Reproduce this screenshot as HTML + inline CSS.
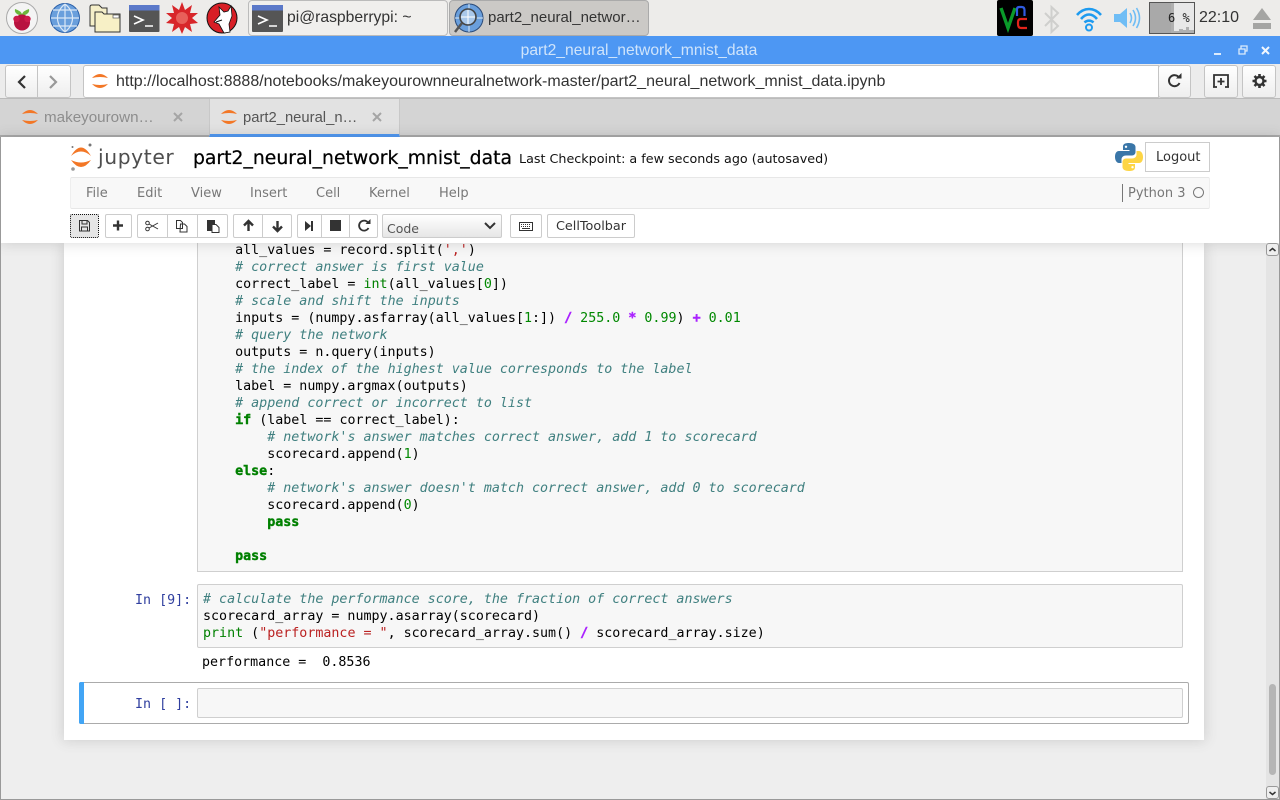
<!DOCTYPE html>
<html><head><meta charset="utf-8">
<style>
html,body{margin:0;padding:0;width:1280px;height:800px;overflow:hidden;background:#eee}
body{position:relative;font-family:"Liberation Sans",sans-serif}
.a{position:absolute;white-space:pre}
.box{position:absolute;box-sizing:border-box}
.d{font-family:"DejaVu Sans",sans-serif}
.code{position:absolute;font:13.33px/17px "DejaVu Sans Mono",monospace;white-space:pre;color:#000;margin:0}
.c{color:#408080;font-style:italic}
.k{color:#008000;font-weight:bold;-webkit-text-stroke:.4px #008000}
.b{color:#008000}
.n{color:#080}
.o{color:#a2f;font-weight:bold;-webkit-text-stroke:.4px #a2f}
.s{color:#ba2121}
.p{font:13.33px/17px "DejaVu Sans Mono",monospace;color:#303f9f;position:absolute;white-space:pre}
.btn{position:absolute;box-sizing:border-box;height:24px;top:214px;background:#fff;border:1px solid #ccc;border-radius:2px}
.menu{position:absolute;top:186px;font:13px/15px "DejaVu Sans",sans-serif;color:#777}
svg{position:absolute;overflow:visible}
</style></head><body>

<!-- taskbar -->
<div class="box" style="left:0;top:0;width:1280px;height:36px;background:#edecea"></div>
<svg style="left:0;top:0" width="250" height="36" viewBox="0 0 250 36">
 <circle cx="22" cy="18" r="15.500" fill="#f4f4f4" stroke="#aaa"/>
 <path d="M15 9q6 2 7 5q1-3 7-5q1 4-4 6h-6q-5-2-4-6z" fill="#6bb53a"/>
 <circle cx="22" cy="22.500" r="8" fill="#b8123f"/><circle cx="16.500" cy="19" r="3.200" fill="#cc1a4a"/><circle cx="27.500" cy="19" r="3.200" fill="#cc1a4a"/>
 <circle cx="65" cy="18" r="14.500" fill="#6a9fdc" stroke="#2a5fa8"/>
 <path d="M65 4V32M51 18H79M53 10H77M53 26H77M65 4C55 12 55 24 65 32M65 4C75 12 75 24 65 32" fill="none" stroke="#dbe8f6" stroke-width="1.200"/>
 <path d="M90 7q0-2 2-2h7l3 3h5v18h-17z" fill="#f5efc9" stroke="#333"/>
 <path d="M95 12h7l2 2h16v18h-25z" fill="#f7f0c6" stroke="#333"/>
 <rect x="113" y="15" width="6" height="3" fill="#fff" stroke="#555" stroke-width=".7"/>
 <rect x="129" y="5" width="30.500" height="27" rx="1" fill="#555"/><rect x="129" y="5" width="30.500" height="5.500" fill="#5b79c9"/>
 <path d="M134 16l9 4-9 4M145 26h8" fill="none" stroke="#fff" stroke-width="1.600"/>
 <path d="M182 2l3 8 7-5-2 8 8 0-6 5 6 5-8 1 2 8-7-5-3 7-3-7-7 5 2-8-8-1 6-5-6-5 8 0-2-8 7 5z" fill="#d8262a"/>
 <circle cx="182" cy="18" r="6" fill="#e8605a"/>
 <circle cx="222" cy="18" r="15" fill="#d81f26" stroke="#111"/>
 <path d="M219 7l5 5 4-1 3-5 1 10-3 8 1 8-6 1-5-9-5-2 6-7z" fill="#fff" stroke="#111" stroke-width=".8"/>
 <path d="M216 22l6-2" stroke="#111" stroke-width="1"/>
</svg>
<div class="box" style="left:248px;top:0;width:200px;height:36px;background:#f0efed;border:1px solid #bbb;border-radius:4px"></div>
<svg style="left:252px;top:4px" width="32" height="28"><rect x="0" y="1" width="31" height="27" rx="1" fill="#555"/><rect x="0" y="1" width="31" height="5.500" fill="#5b79c9"/><path d="M6 12l9 4-9 4M17 22h8" fill="none" stroke="#fff" stroke-width="1.600"/></svg>
<div class="a" style="left:287px;top:9px;font-size:15.700px;line-height:18px;color:#333">pi@raspberrypi: ~</div>
<div class="box" style="left:449px;top:0;width:200px;height:36px;background:#cbc9c6;border:1px solid #aaa;border-radius:4px"></div>
<svg style="left:453px;top:3px" width="32" height="32"><circle cx="16" cy="15" r="14" fill="#6a9fdc" stroke="#2a4a78"/><path d="M2 15H30M16 1V29" stroke="#dbe8f6"/><circle cx="15" cy="14" r="8" fill="#a9c8ea" stroke="#444" stroke-width="1.600"/><path d="M15 7V21M8 14H22" stroke="#fff"/><path d="M9 20L2 29" stroke="#555" stroke-width="2.500"/></svg>
<div class="a" style="left:488px;top:9px;font-size:15px;line-height:18px;color:#333">part2_neural_networ…</div>

<svg style="left:997px;top:0" width="36" height="36"><rect width="36" height="36" rx="2" fill="#000"/><path d="M4 8l7 20 7-20" fill="none" stroke="#0a9a2a" stroke-width="3.400"/><path d="M20 16v-7q0-2 2.500-2h2q3 0 3 3v6" fill="none" stroke="#2f5be0" stroke-width="2.200"/><path d="M30 19h-6q-3 0-3 3v2q0 4 3 4h6" fill="none" stroke="#e2231a" stroke-width="2.200"/></svg>
<svg style="left:1042px;top:5px" width="20" height="28"><path d="M3 8l13 13-6.500 6V2L16 8 3 21" fill="none" stroke="#cfcfcd" stroke-width="2"/></svg>
<svg style="left:1075px;top:5px" width="28" height="26"><path d="M2 10C9 2 19 2 26 10M6 14C11 8 17 8 22 14M9.500 17.500C12 15 16 15 18.500 17.500" fill="none" stroke="#1e9bf0" stroke-width="2.600"/><circle cx="14" cy="22.500" r="3" fill="none" stroke="#1e9bf0" stroke-width="2"/></svg>
<svg style="left:1113px;top:6px" width="28" height="24"><path d="M1 8h6l7-6v20l-7-6H1z" fill="#6fbdf5"/><path d="M17 7q3 5 0 10M20 4q5 8 0 16M23.500 2q6 10 0 20" fill="none" stroke="#6fbdf5" stroke-width="1.600"/></svg>
<div class="box" style="left:1149px;top:2px;width:46px;height:32px;background:#e8e8e8;border:1px solid #555"></div>
<div class="box" style="left:1150px;top:3px;width:21px;height:30px;background:#a9a9a9"></div>
<svg style="left:1171px;top:3px" width="23" height="30"><path d="M0 0H3V28H8V26H12V27H15V24H18V27H23V30H0z" fill="#b0b0b0"/></svg>
<div class="a" style="left:1168px;top:11px;font:12px/14px 'DejaVu Sans Mono',monospace;color:#222">6 %</div>
<div class="a" style="left:1199px;top:9px;font-size:16px;line-height:18px;color:#333">22:10</div>
<svg style="left:1252px;top:8px" width="20" height="22"><path d="M10 0L19 12H1z" fill="#a5a5a3"/><rect x="1" y="15" width="18" height="6" fill="#a5a5a3"/></svg>

<!-- title bar -->
<div class="box" style="left:0;top:36px;width:1280px;height:28px;background:#4d97f3"></div>
<div class="a" style="left:0;top:42px;width:1278px;text-align:center;font-size:15.660px;line-height:18px;color:#cfe4fb">part2_neural_network_mnist_data</div>
<svg style="left:1212px;top:44px" width="62" height="14"><path d="M2 10H9" stroke="#dcebfc" stroke-width="2"/><path d="M27 5h6v5h-6zM29 5V2h6v5h-2" fill="none" stroke="#dcebfc" stroke-width="1.300"/><path d="M50 3l7 7M57 3l-7 7" stroke="#f2f7fe" stroke-width="2"/></svg>

<!-- nav bar -->
<div class="box" style="left:0;top:64px;width:1280px;height:35px;background:#ececec;border-bottom:1px solid #bbb"></div>
<div class="box" style="left:5px;top:65px;width:66px;height:33px;background:linear-gradient(#fff,#eee);border:1px solid #c4c4c4;border-radius:3px"></div>
<div class="box" style="left:37px;top:65px;width:1px;height:33px;background:#c4c4c4"></div>
<svg style="left:16px;top:73px" width="50" height="17"><path d="M9 3L3 9l6 6" fill="none" stroke="#333" stroke-width="2.200"/><path d="M34 3l6 6-6 6" fill="none" stroke="#999" stroke-width="2.200"/></svg>
<div class="box" style="left:83px;top:65px;width:1076px;height:33px;background:#fff;border:1px solid #c4c4c4;border-radius:3px 0 0 3px"></div>
<svg style="left:92px;top:73px" width="18" height="16"><path d="M0 5Q8-3 16 5Q8 3 0 5zM0 11Q8 19 16 11Q8 13 0 11z" fill="#f37726"/></svg>
<div class="a" style="left:116px;top:72px;font-size:16px;line-height:19px;color:#333">http://localhost:8888/notebooks/makeyourownneuralnetwork-master/part2_neural_network_mnist_data.ipynb</div>
<div class="box" style="left:1158px;top:65px;width:33px;height:33px;background:linear-gradient(#fff,#eee);border:1px solid #c4c4c4;border-radius:3px"></div>
<div class="box" style="left:1204px;top:65px;width:34px;height:33px;background:linear-gradient(#fff,#eee);border:1px solid #c4c4c4;border-radius:3px"></div>
<div class="box" style="left:1242px;top:65px;width:34px;height:33px;background:linear-gradient(#fff,#eee);border:1px solid #c4c4c4;border-radius:3px"></div>
<svg style="left:1167px;top:73px" width="16" height="16"><path d="M12.500 10A5.500 5.500 0 1 1 12 4.500" fill="none" stroke="#333" stroke-width="2"/><path d="M9 5.500h5.500V0z" fill="#333"/></svg>
<svg style="left:1213px;top:73px" width="18" height="16"><path d="M1 14V2H15V14" fill="none" stroke="#333" stroke-width="1.800"/><path d="M8 5V12M4.500 8.500H11.500" stroke="#333" stroke-width="1.800"/><path d="M0 14H4M12 14H16" stroke="#333" stroke-width="1.800"/></svg>
<svg style="left:1251px;top:73px" width="17" height="16"><circle cx="8.500" cy="8" r="4" fill="none" stroke="#333" stroke-width="2.400"/><path d="M8.500 1V3.500M8.500 12.500V15M1.500 8H4M13 8H15.500M3.500 3L5.300 4.800M11.700 11.200L13.500 13M13.500 3L11.700 4.800M5.300 11.200L3.500 13" stroke="#333" stroke-width="2.600"/></svg>

<!-- tabs -->
<div class="box" style="left:0;top:99px;width:1280px;height:38px;background:#d4d4d4;border-bottom:2px solid #a9a9a9"></div>
<div class="box" style="left:209px;top:99px;width:191px;height:38px;background:#e2e2e2;border-left:1px solid #c8c8c8;border-right:1px solid #c8c8c8;border-bottom:3px solid #4d97f3"></div>
<svg style="left:22px;top:109px" width="18" height="16"><path d="M0 5Q8-3 16 5Q8 3 0 5zM0 11Q8 19 16 11Q8 13 0 11z" fill="#f37726"/></svg>
<svg style="left:221px;top:109px" width="18" height="16"><path d="M0 5Q8-3 16 5Q8 3 0 5zM0 11Q8 19 16 11Q8 13 0 11z" fill="#f37726"/></svg>
<div class="a" style="left:44px;top:108px;font-size:15.200px;line-height:19px;color:#8d8d8d">makeyourown…</div>
<div class="a" style="left:243px;top:109px;font-size:14.800px;line-height:19px;color:#555">part2_neural_n…</div>
<svg style="left:173px;top:112px" width="210" height="10"><path d="M1 1l8 8M9 1l-8 8" stroke="#a5a5a5" stroke-width="2"/><path d="M200 1l8 8M208 1l-8 8" stroke="#a5a5a5" stroke-width="2"/></svg>

<!-- notebook scrollarea -->
<div class="box" style="left:1px;top:243px;width:1265px;height:556px;background:#eee"></div>
<div class="box" style="left:64px;top:243px;width:1140px;height:497px;background:#fff;box-shadow:0 0 12px 1px rgba(87,87,87,.2)"></div>
<div class="box" style="left:197px;top:243px;width:986px;height:329px;background:#f7f7f7;border:1px solid #cfcfcf;border-top:none"></div>
<pre class="code" style="left:203px;top:242px">    all_values = record.split(<span class="s">','</span>)
    <span class="c"># correct answer is first value</span>
    correct_label = <span class="b">int</span>(all_values[<span class="n">0</span>])
    <span class="c"># scale and shift the inputs</span>
    inputs = (numpy.asfarray(all_values[<span class="n">1</span>:]) <span class="o">/</span> <span class="n">255.0</span> <span class="o">*</span> <span class="n">0.99</span>) <span class="o">+</span> <span class="n">0.01</span>
    <span class="c"># query the network</span>
    outputs = n.query(inputs)
    <span class="c"># the index of the highest value corresponds to the label</span>
    label = numpy.argmax(outputs)
    <span class="c"># append correct or incorrect to list</span>
    <span class="k">if</span> (label == correct_label):
        <span class="c"># network's answer matches correct answer, add 1 to scorecard</span>
        scorecard.append(<span class="n">1</span>)
    <span class="k">else</span>:
        <span class="c"># network's answer doesn't match correct answer, add 0 to scorecard</span>
        scorecard.append(<span class="n">0</span>)
        <span class="k">pass</span>

    <span class="k">pass</span></pre>

<div class="p" style="left:135px;top:592px">In [9]:</div>
<div class="box" style="left:197px;top:584px;width:986px;height:64px;background:#f7f7f7;border:1px solid #cfcfcf;border-radius:2px"></div>
<pre class="code" style="left:203px;top:591px"><span class="c"># calculate the performance score, the fraction of correct answers</span>
scorecard_array = numpy.asarray(scorecard)
<span class="b">print</span> (<span class="s">"performance = "</span>, scorecard_array.sum() <span class="o">/</span> scorecard_array.size)</pre>
<pre class="code" style="left:202px;top:654px">performance =  0.8536</pre>

<div class="box" style="left:79px;top:682px;width:1110px;height:42px;background:#fff;border:1px solid #ababab;border-radius:2px"></div>
<div class="box" style="left:79px;top:682px;width:5px;height:42px;background:#42a5f5;border-radius:2px 0 0 2px"></div>
<div class="p" style="left:135px;top:696px">In [ ]:</div>
<div class="box" style="left:197px;top:688px;width:986px;height:30px;background:#f7f7f7;border:1px solid #cfcfcf;border-radius:2px"></div>

<!-- header -->
<div class="box" style="left:1px;top:137px;width:1278px;height:106px;background:#fff;box-shadow:0 0 12px 1px rgba(87,87,87,.2)"></div>
<svg style="left:69px;top:142px" width="28" height="32">
 <path d="M2 14Q12-3 22 14Q12 5 2 14zM2 18Q12 32 22 18Q12 23 2 18z" fill="#f37726"/>
 <circle cx="21" cy="3" r="1.500" fill="#767677"/><circle cx="3.500" cy="5" r="1" fill="#767677"/><circle cx="4" cy="27" r="1.800" fill="#989798"/>
</svg>
<div class="a d" style="left:98px;top:144px;font-size:20.300px;line-height:26px;color:#4e4e4e;letter-spacing:.6px">jupyter</div>
<div class="a d" style="left:193px;top:148px;font-size:18.800px;line-height:21px;color:#000;font-weight:normal;-webkit-text-stroke:.25px #000">part2_neural_network_mnist_data</div>
<div class="a d" style="left:519px;top:152px;font-size:12.730px;line-height:16px;color:#111">Last Checkpoint: a few seconds ago (autosaved)</div>
<svg style="left:1115px;top:143px" width="28" height="28" viewBox="0 0 28 28">
 <path d="M14 0C8 0 8 2.500 8 4v3h6.500v1H4C1 8 0 11 0 14s1.500 6 4 6h2.500v-3.500C6.500 14 8.500 12.500 11 12.500h6c2 0 3.500-1.500 3.500-3.500V4C20.500 1.500 18 0 14 0z" fill="#3a76a8"/>
 <path d="M14 28c6 0 6-2.500 6-4v-3h-6.500v-1H24c3 0 4-3 4-6s-1.500-6-4-6h-2.500v3.500c0 2.500-2 4-4.500 4h-6c-2 0-3.500 1.500-3.500 3.500V24c0 2.500 2.500 4 6.500 4z" fill="#fdd545"/>
 <circle cx="11" cy="3.800" r="1.200" fill="#fff"/><circle cx="17.500" cy="24.200" r="1.200" fill="#fff"/>
</svg>
<div class="box" style="left:1145px;top:142px;width:65px;height:30px;background:#fff;border:1px solid #ccc"></div>
<div class="a d" style="left:1156px;top:150px;font-size:13px;line-height:15px;color:#333">Logout</div>

<div class="box" style="left:70px;top:177px;width:1140px;height:32px;background:#f8f8f8;border:1px solid #e7e7e7;border-left:1px solid #eee;border-right:1px solid #eee;border-radius:2px"></div>
<div class="menu" style="left:86px">File</div>
<div class="menu" style="left:137px">Edit</div>
<div class="menu" style="left:191px">View</div>
<div class="menu" style="left:250px">Insert</div>
<div class="menu" style="left:316px">Cell</div>
<div class="menu" style="left:369px">Kernel</div>
<div class="menu" style="left:439px">Help</div>
<div class="box" style="left:1122px;top:184px;width:1px;height:18px;background:#777"></div>
<div class="menu" style="left:1128px">Python 3</div>
<div class="box" style="left:1193px;top:187px;width:11px;height:11px;border:1.500px solid #777;border-radius:50%"></div>

<!-- toolbar -->
<div class="btn" style="left:70px;width:29px;background:#e6e6e6;border:1px dotted #111"></div>
<div class="btn" style="left:105px;width:27px"></div>
<div class="btn" style="left:137px;width:91px"></div>
<div class="box" style="left:167px;top:214px;width:1px;height:24px;background:#ccc"></div>
<div class="box" style="left:197px;top:214px;width:1px;height:24px;background:#ccc"></div>
<div class="btn" style="left:233px;width:59px"></div>
<div class="box" style="left:262px;top:214px;width:1px;height:24px;background:#ccc"></div>
<div class="btn" style="left:297px;width:81px"></div>
<div class="box" style="left:321px;top:214px;width:1px;height:24px;background:#ccc"></div>
<div class="box" style="left:349px;top:214px;width:1px;height:24px;background:#ccc"></div>
<div class="box" style="left:382px;top:214px;width:120px;height:24px;background:linear-gradient(#fff,#e6e6e6);border:1px solid #ccc;border-radius:2px"></div>
<div class="a d" style="left:387px;top:221px;font-size:12.500px;line-height:15px;color:#555">Code</div>
<svg style="left:484px;top:222px" width="12" height="8"><path d="M1 1l5 5 5-5" fill="none" stroke="#333" stroke-width="2"/></svg>
<div class="btn" style="left:510px;width:32px"></div>
<svg style="left:519px;top:222px" width="15" height="9"><rect x=".5" y=".5" width="13" height="8" fill="#fff" stroke="#333"/><path d="M2 2.500H12M2 4.500H12" stroke="#333" stroke-dasharray="1 1"/><path d="M3 6.500H11" stroke="#333"/></svg>
<div class="btn" style="left:547px;width:88px"></div>
<div class="a d" style="left:556px;top:219px;font-size:12.800px;line-height:15px;color:#333">CellToolbar</div>

<svg style="left:0;top:0;pointer-events:none" width="1280" height="800">
 <path d="M80 220.500h7.500l2 2v8.500h-10v-10.500zM82 221v3h5v-3M81.500 231v-4h6v4" fill="none" stroke="#333"/>
 <path d="M118 220.500v10M113 225.500h10" stroke="#333" stroke-width="2.400"/>
 <circle cx="147.500" cy="223" r="1.800" fill="none" stroke="#333"/><circle cx="147.500" cy="229" r="1.800" fill="none" stroke="#333"/><path d="M149 224l9 5M149 228l9-5" stroke="#333"/>
 <path d="M176.500 220.500h4l2 2v6h-6zM180.500 224h4l2.500 2.500v5.500h-7z" fill="#fff" stroke="#333"/>
 <path d="M207 220h8v11h-8z" fill="#333"/><path d="M212 224.500h4l3 3v5h-7z" fill="#fff" stroke="#333"/>
 <path d="M248.500 231v-9M244 225.500l4.500-4.500 4.500 4.500" fill="none" stroke="#333" stroke-width="2.400"/>
 <path d="M277.500 221v9M273 226.500l4.500 4.500 4.500-4.500" fill="none" stroke="#333" stroke-width="2.400"/>
 <path d="M305 221l6 5-6 5z" fill="#333"/><path d="M312 221v10" stroke="#333" stroke-width="2"/>
 <rect x="330" y="220" width="11" height="11" fill="#333"/>
 <path d="M368.500 228A5 5 0 1 1 368 222.500" fill="none" stroke="#333" stroke-width="1.800"/><path d="M365.500 224h5v-5z" fill="#333"/>
</svg>

<!-- scrollbar -->
<div class="box" style="left:1266px;top:243px;width:14px;height:556px;background:#e4e4e4"></div>
<div class="box" style="left:1269px;top:684px;width:7px;height:91px;background:#b5b5b5;border-radius:4px"></div>
<div class="box" style="left:1266px;top:243px;width:13px;height:13px;background:#eee;border:1px solid #999;border-radius:3px"></div>
<div class="box" style="left:1266px;top:786px;width:13px;height:13px;background:#eee;border:1px solid #999;border-radius:3px"></div>
<svg style="left:1266px;top:243px" width="13" height="556"><path d="M3.500 8l3-2.500 3 2.500" fill="none" stroke="#333" stroke-width="1.500"/><path d="M3.500 549l3 2.500 3-2.500" fill="none" stroke="#333" stroke-width="1.500"/></svg>

<!-- window frame -->
<div class="box" style="left:0;top:137px;width:1px;height:663px;background:#999"></div>
<div class="box" style="left:1279px;top:137px;width:1px;height:663px;background:#999"></div>
<div class="box" style="left:0;top:799px;width:1280px;height:1px;background:#999"></div>
</body></html>
